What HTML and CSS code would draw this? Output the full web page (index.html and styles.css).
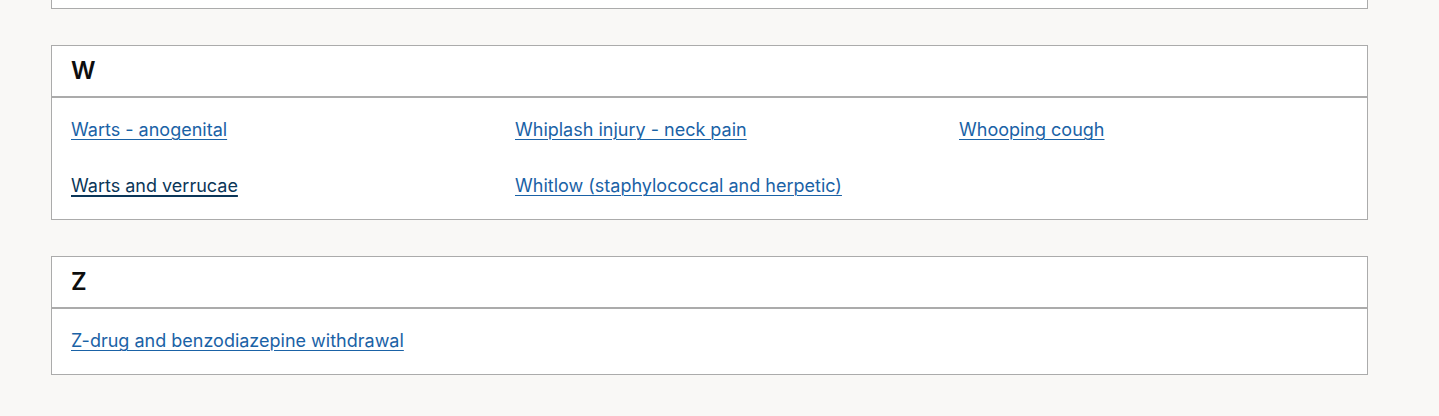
FILE: index.html
```html
<!DOCTYPE html>
<html lang="en">
<head>
<meta charset="utf-8">
<title>Health topics A to Z</title>
<link rel="stylesheet" href="styles.css">
</head>
<body>
<main class="page">
  <div class="card card-partial"></div>

  <section class="card">
    <h2 class="card-head">W</h2>
    <ul class="card-body">
      <li><a href="#">Warts - anogenital</a></li>
      <li><a href="#">Whiplash injury - neck pain</a></li>
      <li><a href="#">Whooping cough</a></li>
      <li><a class="hover" href="#">Warts and verrucae</a></li>
      <li><a href="#">Whitlow (staphylococcal and herpetic)</a></li>
    </ul>
  </section>

  <section class="card">
    <h2 class="card-head">Z</h2>
    <ul class="card-body">
      <li><a href="#">Z-drug and benzodiazepine withdrawal</a></li>
    </ul>
  </section>
</main>
</body>
</html>
```

FILE: styles.css
```css
html, body {
  margin: 0;
  padding: 0;
  background: #f9f8f6;
  font-family: Inter, "Liberation Sans", Arial, sans-serif;
}

.page {
  display: flex;
  flex-direction: column;
  gap: 36px;
  width: 1317px;
  margin-left: 51px;
}

.card {
  background: #ffffff;
  border: 1px solid #ababab;
}

.card-partial {
  border-top: none;
  height: 8px;
}

.card-head {
  margin: 0;
  padding: 10px 19px;
  font-size: 24px;
  line-height: 30px;
  font-weight: 600;
  color: #0e0e0e;
  border-bottom: 2px solid #ababab;
}

.card-body {
  list-style: none;
  margin: 0;
  padding: 20px 19px 21px;
  display: grid;
  grid-template-columns: 444px 444px 1fr;
  row-gap: 32px;
}

.card-body li {
  font-size: 18px;
  line-height: 24px;
}

.card-body a {
  color: #1a62a6;
  text-decoration: underline;
  text-decoration-thickness: 1px;
  text-underline-offset: 3px;
}

.card-body a.hover {
  color: #0b3658;
  text-decoration-thickness: 2px;
}
```
